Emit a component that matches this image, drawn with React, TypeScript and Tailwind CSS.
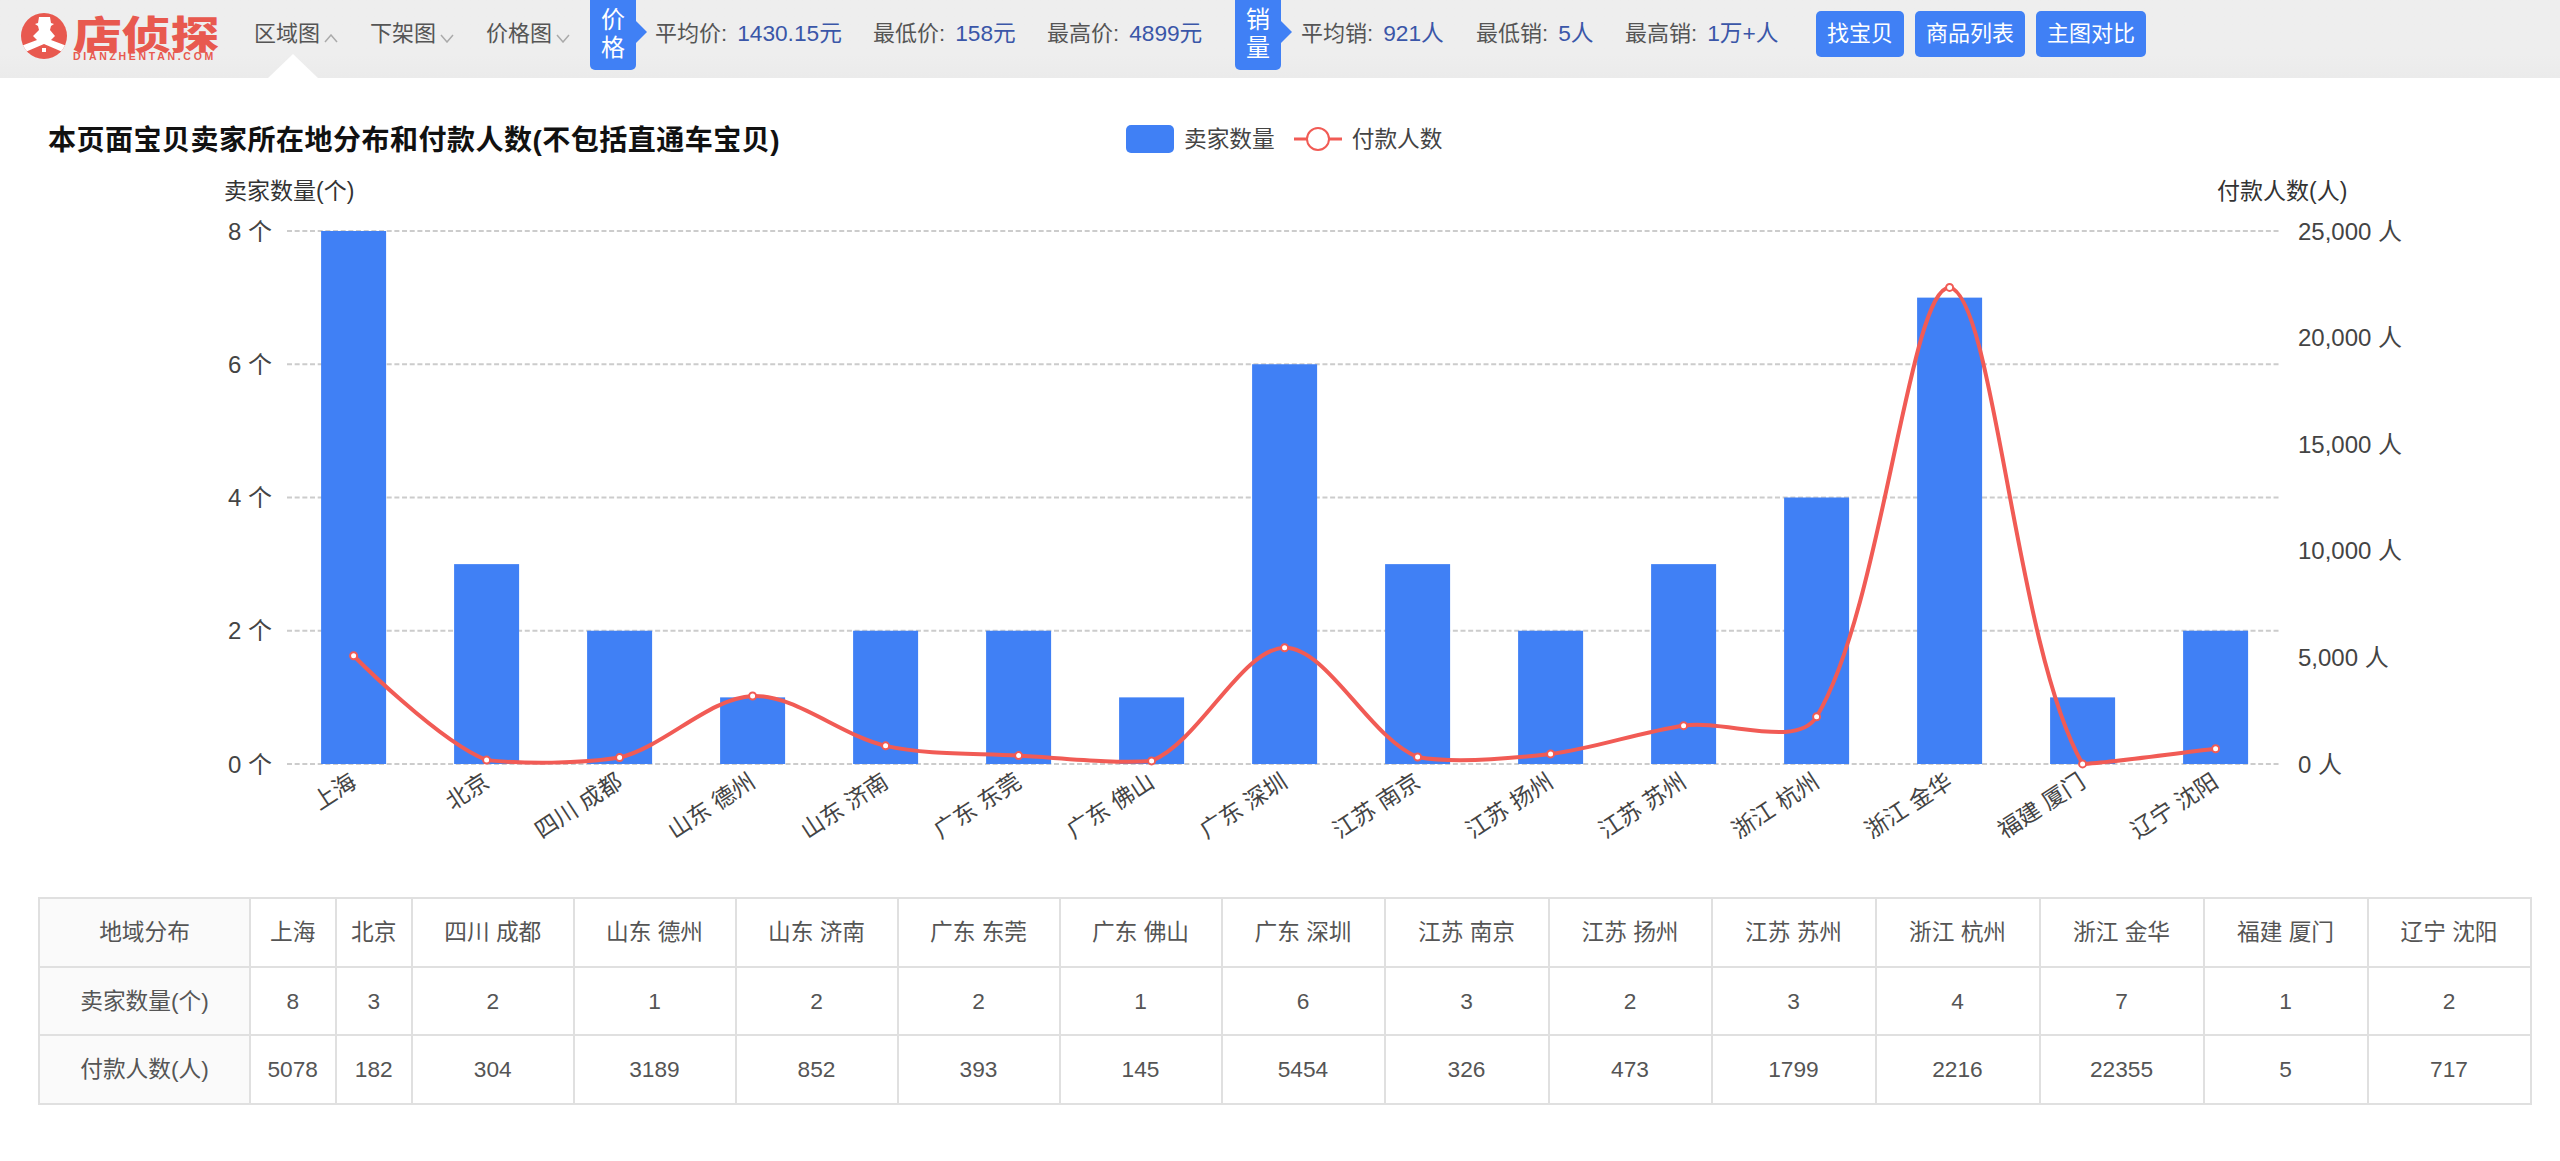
import React from 'react';

const FONT = { fontFamily: '"Liberation Sans", "Noto Sans CJK SC", sans-serif' };

const CITIES = ['上海', '北京', '四川 成都', '山东 德州', '山东 济南', '广东 东莞', '广东 佛山', '广东 深圳', '江苏 南京', '江苏 扬州', '江苏 苏州', '浙江 杭州', '浙江 金华', '福建 厦门', '辽宁 沈阳'];
const SELLERS = [8, 3, 2, 1, 2, 2, 1, 6, 3, 2, 3, 4, 7, 1, 2];
const BUYERS = [5078, 182, 304, 3189, 852, 393, 145, 5454, 326, 473, 1799, 2216, 22355, 5, 717];
const COL_WIDTHS = ['w-[85.5px]', 'w-[76.5px]', 'w-[161.5px]', 'w-[162px]', 'w-[162px]', 'w-[162px]', 'w-[162px]', 'w-[163px]', 'w-[164px]', 'w-[163px]', 'w-[164px]', 'w-[164px]', 'w-[164px]', 'w-[164px]', 'w-[163px]'];

// chart geometry, in the svg's own pixels
const X0 = 353.6;
const STEP = 133;
const BASE = 764;
const PLOT_H = 533;
const SMOOTH = 0.32;

const barX = (i: number) => X0 + i * STEP;
const sellerY = (v: number) => BASE - (v / 8) * PLOT_H;
const buyerY = (v: number) => BASE - (v / 25000) * PLOT_H;

// bezier smoothing of the line series, control points never leave the data's overall y range
const smoothPath = (pts: [number, number][]) => {
  const dist = (a: [number, number], b: [number, number]) => Math.hypot(a[0] - b[0], a[1] - b[1]);
  const ys = pts.map((p) => p[1]);
  const minY = Math.min(...ys);
  const maxY = Math.max(...ys);
  const fit = (y: number) => Math.max(minY, Math.min(maxY, y));
  let d = `M${pts[0][0]} ${pts[0][1]}`;
  let out: [number, number] = pts[0];
  for (let i = 1; i < pts.length; i++) {
    const p = pts[i];
    const prev = pts[i - 1];
    const next = pts[i + 1] ?? p;
    const vx = next[0] - prev[0];
    const vy = next[1] - prev[1];
    const a = dist(p, prev);
    const b = dist(p, next);
    const ra = a / (a + b);
    const rb = b / (a + b);
    d += ` C${out[0]} ${out[1]} ${p[0] - vx * SMOOTH * ra} ${fit(p[1] - vy * SMOOTH * ra)} ${p[0]} ${p[1]}`;
    out = [p[0] + vx * SMOOTH * rb, fit(p[1] + vy * SMOOTH * rb)];
  }
  return d;
};

const Logo = () => (
  <div className="flex items-start ml-[21px] mt-[13px] w-[200px] h-[46px] shrink-0">
    <svg width="46" height="46" viewBox="0 0 46 46" className="shrink-0">
      <defs>
        <clipPath id="logo-disc">
          <circle cx="23" cy="23" r="23" />
        </clipPath>
      </defs>
      <circle cx="23" cy="23" r="23" fill="#e8594f" />
      <path
        clipPath="url(#logo-disc)"
        d="M18 4L29 4L30 10L33 11L30 13L29 17L34 23L30 27L46 33L44 40L23 31L2 40L0 33L16 27L12 23L18 17L17 13L14 11L17 10Z"
        fill="#fff"
      />
      <rect x="21" y="35" width="4" height="4" fill="#fff" />
    </svg>
    <div className="ml-[6px]">
      <div
        className="h-[39px] text-[39px] leading-[39px] font-black text-[#e8594f] whitespace-nowrap scale-x-[1.25] origin-left"
        style={{ fontFamily: '"Noto Sans CJK SC", sans-serif' }}
      >
        店侦探
      </div>
      <div className="text-[10.5px] leading-[9px] font-bold text-[#e8594f] tracking-[2.7px] whitespace-nowrap">DIANZHENTAN.COM</div>
    </div>
  </div>
);

const Chevron = ({ up }: { up?: boolean }) => (
  <svg width="14" height="9" viewBox="0 0 14 9" className="ml-[4px] mt-[10px]">
    <path d={up ? 'M1 8L7 1L13 8' : 'M1 1L7 8L13 1'} fill="none" stroke="#aaaaaa" strokeWidth="1.5" />
  </svg>
);

const NavItem = ({ label, active }: { label: string; active?: boolean }) => (
  <div className="relative flex items-center w-[116px] shrink-0 h-full">
    <span>{label}</span>
    <Chevron up={active} />
    {active && (
      <div className="absolute left-[14px] bottom-[-12px] w-0 h-0 border-x-[25px] border-x-transparent border-b-[24px] border-b-white" />
    )}
  </div>
);

const Badge = ({ a, b }: { a: string; b: string }) => (
  <div className="relative w-[46px] h-[70px] self-start bg-[#4080f5] rounded-b-[5px] text-white text-[24px] leading-[28px] text-center pt-[6px]">
    <div>{a}</div>
    <div>{b}</div>
    <div className="absolute left-[46px] top-[21px] w-0 h-0 border-y-[11px] border-y-transparent border-l-[11px] border-l-[#4080f5]" />
  </div>
);

const Stat = ({ label, value, w }: { label: string; value: string; w: string }) => (
  <div className={`flex items-baseline whitespace-nowrap ${w}`}>
    <span>{label}:</span>
    <span className="ml-[10px] text-[22.7px] text-[#3a56a8]">{value}</span>
  </div>
);

const ActionButton = ({ label }: { label: string }) => (
  <button type="button" className="h-[46px] px-[11px] rounded-[5px] bg-[#4080f5] text-white text-[22px] leading-none">
    {label}
  </button>
);

const TopBar = () => (
  <header className="flex h-[78px] bg-gradient-to-b from-[#eeeeee] from-70% to-[#ebebeb] text-[22px] text-[#555555]">
    <Logo />
    <div className="flex items-center ml-[33px] h-[66px] w-[336px] shrink-0 self-start">
      <NavItem label="区域图" active />
      <NavItem label="下架图" />
      <NavItem label="价格图" />
    </div>
    <div className="flex items-center h-[66px] self-start">
      <Badge a="价" b="格" />
      <div className="flex items-center ml-[19px] w-[580px]">
        <Stat label="平均价" value="1430.15元" w="w-[218px]" />
        <Stat label="最低价" value="158元" w="w-[174px]" />
        <Stat label="最高价" value="4899元" w="w-[188px]" />
      </div>
      <Badge a="销" b="量" />
      <div className="flex items-center ml-[20px] w-[515px]">
        <Stat label="平均销" value="921人" w="w-[175px]" />
        <Stat label="最低销" value="5人" w="w-[149px]" />
        <Stat label="最高销" value="1万+人" w="w-[191px]" />
      </div>
      <div className="flex gap-[11px] mt-[2px]">
        <ActionButton label="找宝贝" />
        <ActionButton label="商品列表" />
        <ActionButton label="主图对比" />
      </div>
    </div>
  </header>
);

const Legend = () => (
  <div className="flex items-center ml-[346px] text-[22.7px] text-[#444444]">
    <div className="w-[48px] h-[28px] rounded-[5px] bg-[#4080f5]" />
    <span className="ml-[10px]">卖家数量</span>
    <svg width="48" height="28" viewBox="0 0 48 28" className="ml-[19px]">
      <path d="M0 14H48" stroke="#f15b55" strokeWidth="3" />
      <circle cx="24" cy="14" r="11" fill="#fff" stroke="#f15b55" strokeWidth="2" />
    </svg>
    <span className="ml-[10px]">付款人数</span>
  </div>
);

const Chart = () => {
  const line = BUYERS.map((v, i): [number, number] => [barX(i), buyerY(v)]);
  const axisLeft = [0, 2, 4, 6, 8];
  const axisRight = [
    { t: '0 人', v: 0 },
    { t: '5,000 人', v: 5000 },
    { t: '10,000 人', v: 10000 },
    { t: '15,000 人', v: 15000 },
    { t: '20,000 人', v: 20000 },
    { t: '25,000 人', v: 25000 },
  ];
  return (
    // viewBox starts at the svg's top offset, so numbers read off the screenshot stay as they are
    <svg width="2560" height="720" viewBox="0 170 2560 720" className="block" style={FONT}>
      <text x="224" y="190.5" dominantBaseline="central" fontSize="23" fill="#333">卖家数量(个)</text>
      <text x="2217" y="190.5" dominantBaseline="central" fontSize="23" fill="#333">付款人数(人)</text>
      {axisLeft.map((v) => (
        <g key={v}>
          <line x1="287" x2="2279" y1={sellerY(v)} y2={sellerY(v)} stroke="#cccccc" strokeWidth="2" strokeDasharray="5 2.67" />
          <text x="272" y={sellerY(v)} dominantBaseline="central" textAnchor="end" fontSize="24" fill="#444">{v} 个</text>
        </g>
      ))}
      {axisRight.map((a) => (
        <text key={a.t} x="2298" y={buyerY(a.v)} dominantBaseline="central" fontSize="24" fill="#444">{a.t}</text>
      ))}
      {SELLERS.map((v, i) => (
        <rect key={i} x={barX(i) - 32.5} y={sellerY(v)} width="65" height={BASE - sellerY(v)} fill="#4080f5" />
      ))}
      <path d={smoothPath(line)} fill="none" stroke="#f15b55" strokeWidth="4" />
      {line.map(([x, y], i) => (
        <circle key={i} cx={x} cy={y} r="3.5" fill="#fff" stroke="#f15b55" strokeWidth="2" />
      ))}
      {CITIES.map((c, i) => (
        <text key={c} transform={`translate(${barX(i)} 779) rotate(-33)`} textAnchor="end" dominantBaseline="central" fontSize="23" fill="#444">{c}</text>
      ))}
    </svg>
  );
};

const Row = ({ head, cells }: { head: string; cells: (string | number)[] }) => (
  <tr className="h-[68.5px]">
    <td className="border-2 border-[#e0e0e0] bg-[#fafafa] text-center">{head}</td>
    {cells.map((c, i) => (
      <td key={i} className="border-2 border-[#e0e0e0] text-center">{c}</td>
    ))}
  </tr>
);

const DataTable = () => (
  <table className="table-fixed border-collapse w-[2492px] ml-[38px] text-[22.7px] text-[#555555]">
    <colgroup>
      <col className="w-[211px]" />
      {COL_WIDTHS.map((w, i) => (
        <col key={i} className={w} />
      ))}
    </colgroup>
    <tbody>
      <Row head="地域分布" cells={CITIES} />
      <Row head="卖家数量(个)" cells={SELLERS} />
      <Row head="付款人数(人)" cells={BUYERS} />
    </tbody>
  </table>
);

export default function App() {
  return (
    <div className="w-[2560px] h-[1161px] overflow-hidden bg-white" style={FONT}>
      <TopBar />
      <div className="flex items-center h-[92px] pl-[48px] pt-[31px]">
        <h1 className="mt-[3px] text-[28px] font-bold text-[#111111] tracking-[0.5px] w-[732px] whitespace-nowrap">
          本页面宝贝卖家所在地分布和付款人数(不包括直通车宝贝)
        </h1>
        <Legend />
      </div>
      <Chart />
      <div className="h-[7px]" />
      <DataTable />
    </div>
  );
}
